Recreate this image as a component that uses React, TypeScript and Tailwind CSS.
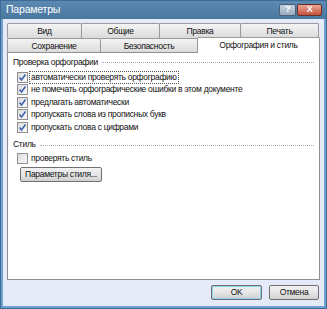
import React from 'react';

const font = { fontFamily: '"Liberation Sans", Arial, sans-serif' };

const Check = ({ checked }: { checked: boolean }) => (
  <span className="w-[11px] h-[11px] border border-[#8f8f8f] bg-gradient-to-br from-[#dcdcdc] to-[#fbfbfb] flex items-center justify-center shrink-0">
    {checked && (
      <svg width="9" height="9" viewBox="0 0 9 9">
        <path d="M1.5 4.5 L3.5 7 L7.5 1.5" fill="none" stroke="#3a5fb0" strokeWidth="1.5" />
      </svg>
    )}
  </span>
);

const Row = ({ label, checked = true, focus = false }: { label: string; checked?: boolean; focus?: boolean }) => (
  <div className="flex items-center gap-[2px] h-[12.5px]">
    <Check checked={checked} />
    <span className={focus ? 'outline outline-1 outline-dotted outline-[#555] leading-[11px] px-[1px]' : 'leading-[11px] px-[1px]'}>{label}</span>
  </div>
);

const Group = ({ title }: { title: string }) => (
  <div className="flex items-center gap-1 h-[12px]">
    <span>{title}</span>
    <div className="flex-1 border-t border-dotted border-[#a9a9b9] mt-[1px]" />
  </div>
);

const Tab = ({ label, className = '' }: { label: string; className?: string }) => (
  <div className={`h-[15px] border border-b-0 border-[#9a9a9a] bg-gradient-to-b from-[#f4f4f4] to-[#dadada] flex items-center justify-center rounded-t-[2px] ${className}`}>
    {label}
  </div>
);

const Btn = ({ label, className = '' }: { label: string; className?: string }) => (
  <div className={`h-[15px] whitespace-nowrap border border-[#707070] rounded-[2px] bg-gradient-to-b from-[#f2f2f2] via-[#e6e6e6] to-[#d0d0d0] flex items-center justify-center ${className}`}>
    {label}
  </div>
);

export default function App() {
  return (
    <div style={font} className="w-[327px] h-[309px] text-[8.5px] tracking-[-0.3px] text-[#111] bg-[#3f6c96] p-[1px] overflow-hidden">
      <div className="w-full h-full flex flex-col bg-[#e4eaf7] border-x-[2px] border-b-[2px] border-[#6ea2cf]">
        <div className="h-[18px] -mx-[2px] bg-gradient-to-b from-[#5b89b3] to-[#4a789f] flex items-center justify-between pl-[5px] pr-[4px]">
          <span className="text-white text-[10.5px] tracking-[-0.2px]">Параметры</span>
          <div className="flex gap-[1px] mt-[-1px]">
            <div className="w-[17px] h-[12px] border border-[#4c5f74] rounded-[2px] bg-gradient-to-b from-[#c5d3df] to-[#98acbf] text-white text-[9px] font-bold flex items-center justify-center">?</div>
            <div className="w-[25px] h-[12px] border border-[#6b2e22] rounded-[2px] bg-gradient-to-b from-[#e9a595] to-[#c4513b] text-white text-[9px] font-bold flex items-center justify-center">X</div>
          </div>
        </div>
        <div className="flex flex-col px-[4px] pt-[4px]">
          <div className="flex pr-[1px]">
            <Tab label="Вид" className="w-[75px]" />
            <Tab label="Общие" className="w-[79px] -ml-[1px]" />
            <Tab label="Правка" className="w-[82px] -ml-[1px]" />
            <Tab label="Печать" className="flex-1 -ml-[1px]" />
          </div>
          <div className="flex items-end">
            <Tab label="Сохранение" className="w-[94px]" />
            <Tab label="Безопасность" className="w-[98px] -ml-[1px]" />
            <div className="flex-1 -ml-[1px] h-[16px] -mt-[1px] border border-b-0 border-[#9a9a9a] bg-white flex items-center justify-center rounded-t-[2px] relative z-10">
              Орфография и стиль
            </div>
          </div>
          <div className="h-[228px] bg-white border border-[#8e8f8f] -mt-[1px] px-[5px] pt-[3px] flex flex-col">
            <Group title="Проверка орфографии" />
            <div className="flex flex-col pl-[4px] pt-[3px]">
              <Row label="автоматически проверять орфографию" focus />
              <Row label="не помечать орфографические ошибки в этом документе" />
              <Row label="предлагать автоматически" />
              <Row label="пропускать слова из прописных букв" />
              <Row label="пропускать слова с цифрами" />
            </div>
            <div className="mt-[5px]">
              <Group title="Стиль" />
            </div>
            <div className="flex flex-col pl-[4px] pt-[2px]">
              <Row label="проверять стиль" checked={false} />
            </div>
            <div className="pl-[7px] pt-[2px]">
              <Btn label="Параметры стиля..." className="w-[82px]" />
            </div>
          </div>
          <div className="flex justify-end gap-[7px] pt-[5px] pr-[1px]">
            <Btn label="OK" className="w-[51px] border-[#3c7fb1] shadow-[inset_0_0_0_1px_#8ad2f0]" />
            <Btn label="Отмена" className="w-[50px]" />
          </div>
        </div>
      </div>
    </div>
  );
}
